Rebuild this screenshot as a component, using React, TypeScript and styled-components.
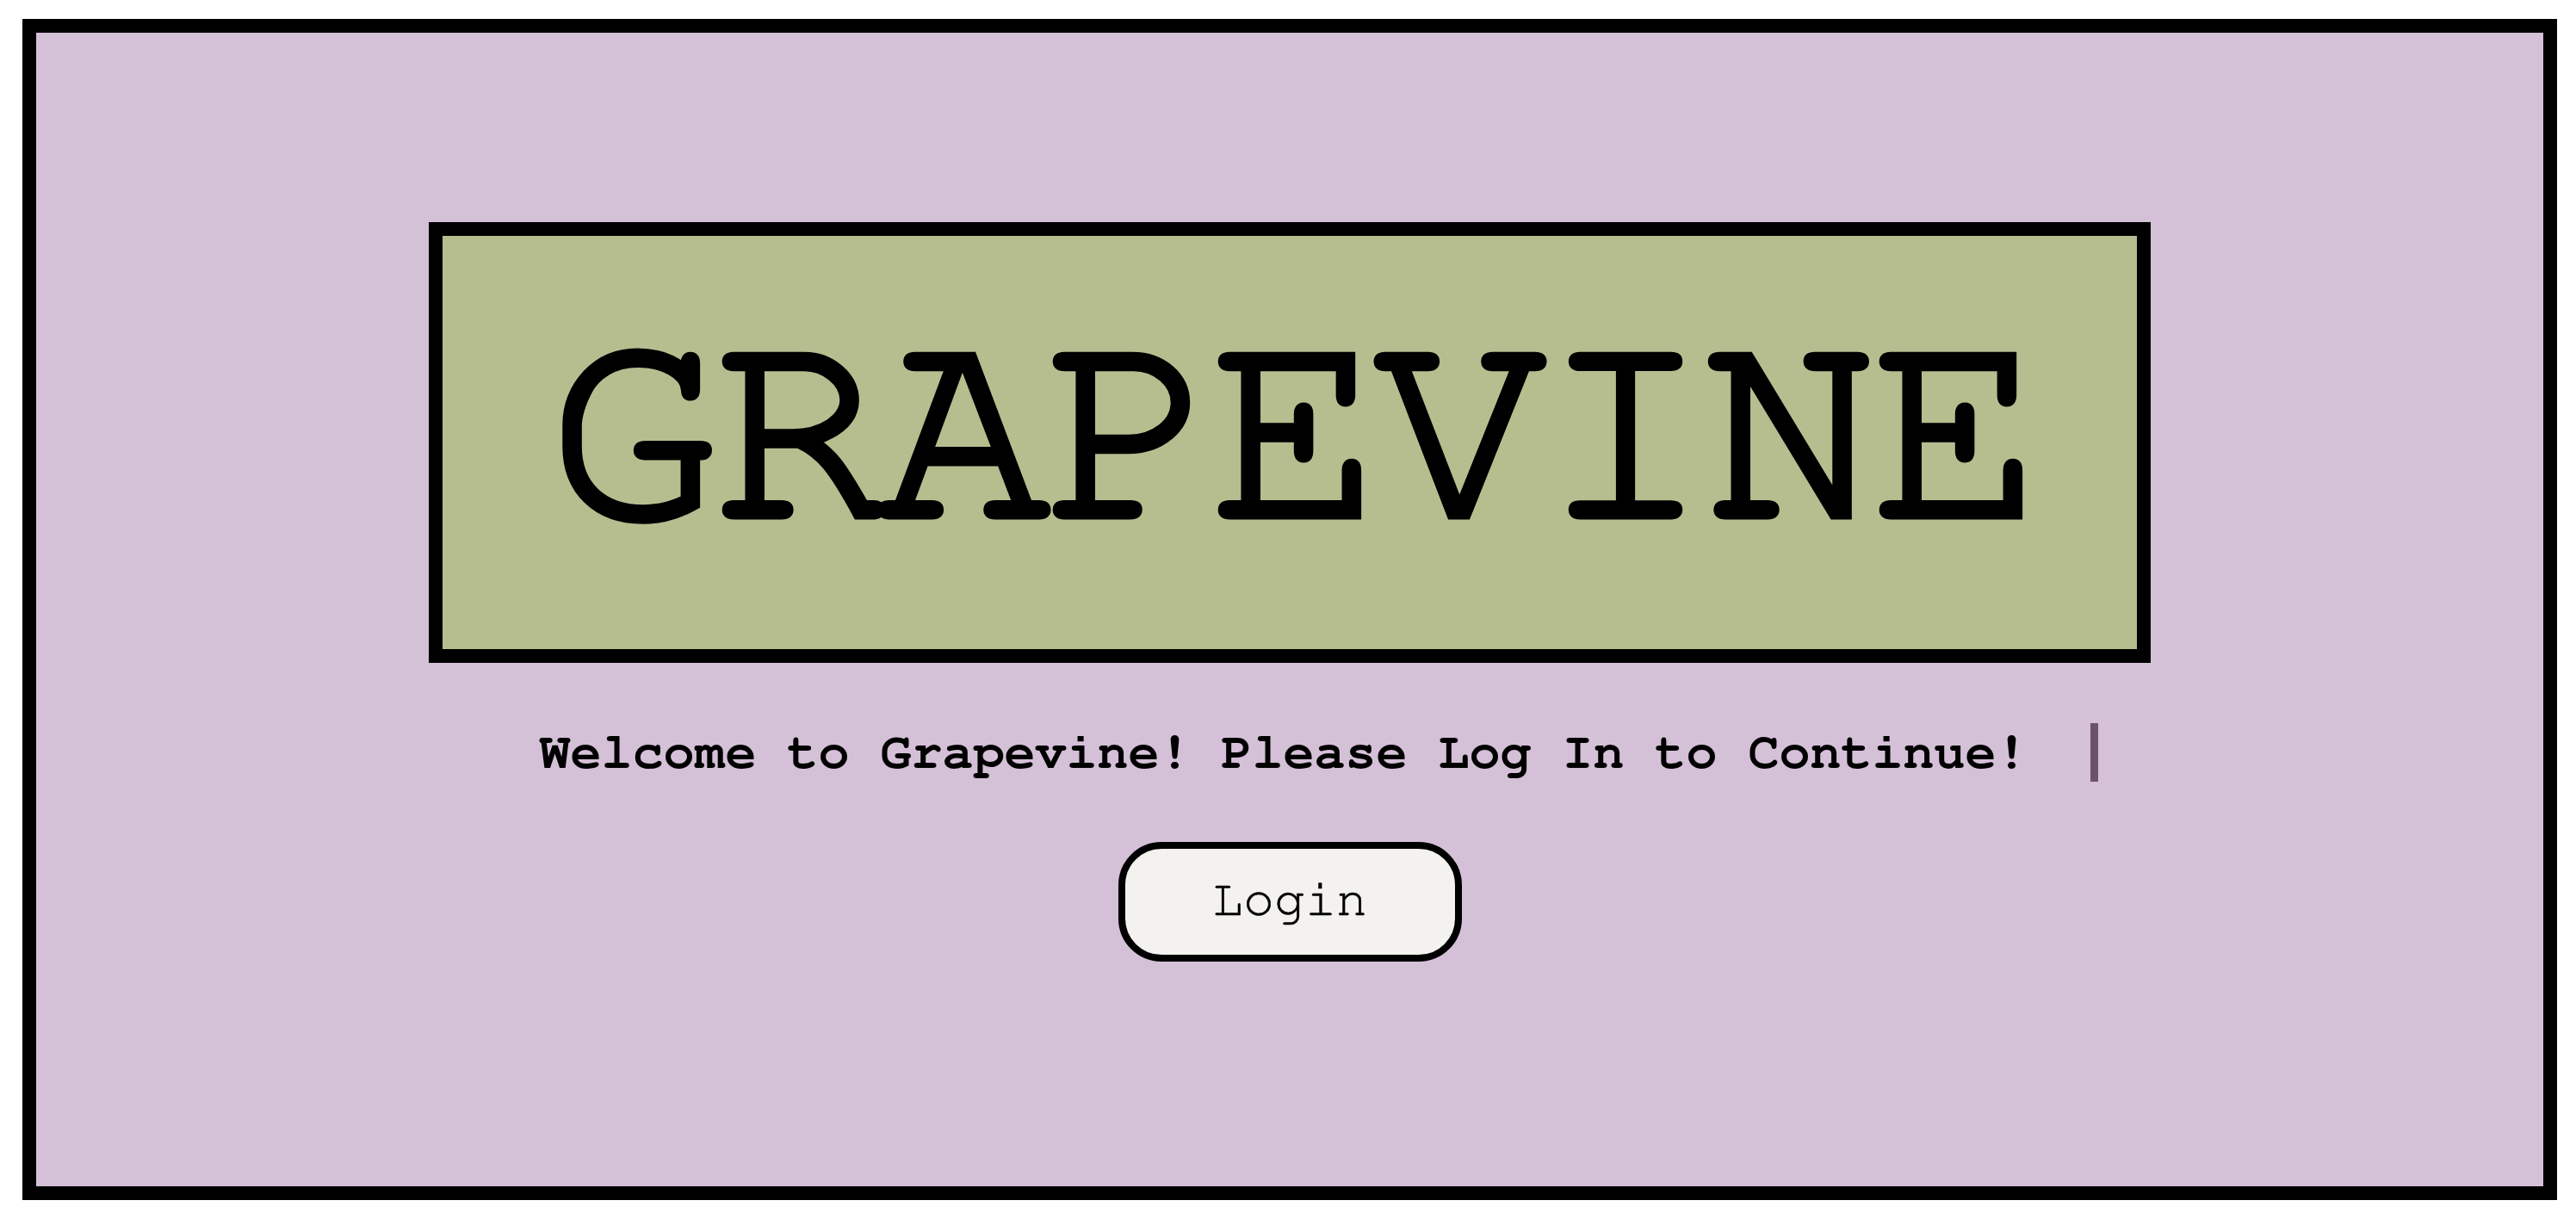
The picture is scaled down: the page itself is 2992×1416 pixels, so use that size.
import React from "react";
import styled, { createGlobalStyle } from "styled-components";

const MONO = `FreeMono, "TeX Gyre Cursor", "Liberation Mono", monospace`;

const GlobalStyle = createGlobalStyle`
  html, body {
    margin: 0;
    padding: 0;
    background: #ffffff;
  }
  body {
    font-family: ${MONO};
  }
  * { box-sizing: border-box; }
`;

const Frame = styled.main`
  width: 2944px;
  height: 1372px;
  margin: 22px 22px 22px 26px;
  border: 16px solid #000;
  background: #d4c0d7;
  display: flex;
  flex-direction: column;
  align-items: center;
  padding-top: 220px;
`;

const TitleBox = styled.div`
  width: 2000px;
  height: 512px;
  border: 16px solid #000;
  background: #b6be90;
  display: flex;
  align-items: center;
  justify-content: center;
`;

const Title = styled.h1`
  margin: 0 -6px 0 0;
  padding-bottom: 28px;
  font-family: ${MONO};
  font-weight: 400;
  font-size: 330px;
  letter-spacing: -6px;
  line-height: 1;
  color: #000;
  -webkit-text-stroke: 9px #000;
  paint-order: stroke fill;
`;

const WelcomeRow = styled.div`
  margin-top: 70px;
  padding-left: 67px;
  display: flex;
  justify-content: center;
`;

const Typed = styled.p`
  margin: 0;
  width: 1810px;
  height: 68px;
  font-family: ${MONO};
  font-weight: 700;
  font-size: 60px;
  line-height: 68px;
  color: #000;
  white-space: nowrap;
  border-right: 9px solid #6b5269;
`;

const LoginButton = styled.button`
  margin-top: 70px;
  width: 399px;
  height: 139px;
  border: 8px solid #000;
  border-radius: 50px;
  background: #f3f2ee;
  font-family: ${MONO};
  font-weight: 400;
  font-size: 60px;
  line-height: 68px;
  color: #000;
  -webkit-text-stroke: 0.6px #000;
  cursor: pointer;
  display: flex;
  align-items: center;
  justify-content: center;
  padding: 0 0 6px;
`;

export default function App() {
  return (
    <>
      <GlobalStyle />
      <Frame>
        <TitleBox>
          <Title>GRAPEVINE</Title>
        </TitleBox>
        <WelcomeRow>
          <Typed>Welcome to Grapevine! Please Log In to Continue!</Typed>
        </WelcomeRow>
        <LoginButton>Login</LoginButton>
      </Frame>
    </>
  );
}
